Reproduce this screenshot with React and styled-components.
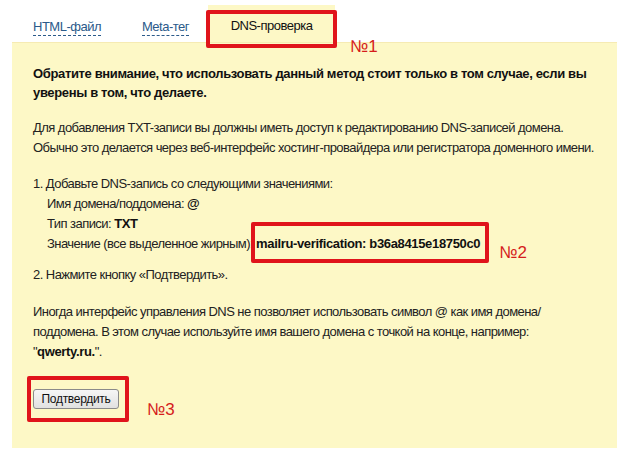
import React from "react";
import styled, { createGlobalStyle } from "styled-components";

const GlobalStyle = createGlobalStyle`
  html, body {
    margin: 0;
    padding: 0;
    background: #ffffff;
  }
  body {
    font-family: "Liberation Sans", Arial, sans-serif;
    color: #222;
  }
`;

const Page = styled.div`
  width: 630px;
  height: 464px;
  overflow: hidden;
  background: #fff;
`;

const Tabs = styled.div`
  display: flex;
  align-items: flex-end;
  height: 42px;
  padding-left: 33px;
  gap: 41px;
`;

const TabLink = styled.span`
  color: #2b5a8a;
  font-size: 13px;
  line-height: 16px;
  letter-spacing: -0.5px;
  margin-bottom: 6px;
  border-bottom: 1px dashed #2b5a8a;
  cursor: pointer;
`;

const ActiveTab = styled.span`
  position: relative;
  display: flex;
  align-items: center;
  justify-content: center;
  width: 127px;
  height: 37px;
  padding-top: 4px;
  box-sizing: border-box;
  margin-left: -22px;
  background: #fdf8c6;
  color: #111;
  font-size: 13px;
  letter-spacing: -0.5px;
`;

const Panel = styled.div`
  margin: 0 13px 0 12px;
  height: 406px;
  box-sizing: border-box;
  padding: 21px 21px 0 21px;
  background: #fdf8c6;
  border-top: 1px solid #f6ebb3;
  font-size: 13px;
  line-height: 20px;
  letter-spacing: -0.55px;
  color: #222;

  b {
    color: #111;
    letter-spacing: -0.35px;
  }
`;

const Para = styled.p`
  margin: 0 0 16px 0;
  font-weight: ${(p) => (p.$bold ? "bold" : "normal")};
  line-height: ${(p) => (p.$bold ? "19px" : "20px")};
  letter-spacing: ${(p) => (p.$bold ? "-0.35px" : "-0.55px")};
  color: ${(p) => (p.$bold ? "#111" : "#222")};
`;

const Steps = styled.div`
  margin: 0 0 17px 0;
`;

const Step = styled.div`
  padding-left: ${(p) => (p.$sub ? "14px" : "0")};
  margin-top: ${(p) => (p.$gap ? "11px" : "0")};
`;

const Highlight = styled.b`
  position: relative;
`;

const ButtonWrap = styled.div`
  position: relative;
  display: inline-block;
  margin-top: 11px;
`;

const Button = styled.button`
  display: block;
  width: 86px;
  height: 20px;
  padding: 0;
  font-family: "Liberation Sans", Arial, sans-serif;
  font-size: 12px;
  letter-spacing: -0.3px;
  color: #111;
  background: linear-gradient(#f6f6f6, #e1e1e1);
  border: 1px solid #8a8a8a;
  border-radius: 3px;
`;

/* red annotation boxes drawn over the screenshot */
const Frame = styled.span`
  position: absolute;
  top: ${(p) => p.$t}px;
  bottom: ${(p) => p.$b}px;
  left: ${(p) => p.$l}px;
  right: ${(p) => p.$r}px;
  border: 4px solid #e0141b;
  border-radius: 2px;
  pointer-events: none;
`;

const Mark = styled.span`
  position: absolute;
  top: ${(p) => p.$t}px;
  left: calc(100% + ${(p) => p.$l}px);
  color: #d51c1c;
  font-family: "Liberation Sans", Arial, sans-serif;
  font-weight: normal;
  font-size: 17px;
  line-height: 20px;
  letter-spacing: 0;
  white-space: nowrap;
`;

const App = () => {
  return (
    <Page>
      <GlobalStyle />
      <Tabs>
        <TabLink>HTML-файл</TabLink>
        <TabLink>Meta-тег</TabLink>
        <ActiveTab>
          DNS-проверка
          <Frame $t={5} $b={-6} $l={-2} $r={-2} />
          <Mark $t={32} $l={15}>№1</Mark>
        </ActiveTab>
      </Tabs>
      <Panel>
        <Para $bold>
          Обратите внимание, что использовать данный метод стоит только в том
          случае, если вы уверены в том, что делаете.
        </Para>
        <Para>
          Для добавления TXT-записи вы должны иметь доступ к редактированию
          DNS-записей домена. Обычно это делается через веб-интерфейс
          хостинг-провайдера или регистратора доменного имени.
        </Para>
        <Steps>
          <Step>1. Добавьте DNS-запись со следующими значениями:</Step>
          <Step $sub>
            Имя домена/поддомена: <b>@</b>
          </Step>
          <Step $sub>
            Тип записи: <b>TXT</b>
          </Step>
          <Step $sub>
            Значение (все выделенное жирным):{" "}
            <Highlight>
              mailru-verification: b36a8415e18750c0
              <Frame $t={-14} $b={-12} $l={-5} $r={-9} />
              <Mark $t={7} $l={19}>№2</Mark>
            </Highlight>
          </Step>
          <Step $gap>2. Нажмите кнопку «Подтвердить».</Step>
        </Steps>
        <Para>
          Иногда интерфейс управления DNS не позволяет использовать символ @
          как имя домена/ поддомена. В этом случае используйте имя вашего
          домена с точкой на конце, например: "<b>qwerty.ru.</b>".
        </Para>
        <ButtonWrap>
          <Button>Подтвердить</Button>
          <Frame $t={-13} $b={-13} $l={-6} $r={-10} />
          <Mark $t={11} $l={28}>№3</Mark>
        </ButtonWrap>
      </Panel>
    </Page>
  );
};

export default App;
